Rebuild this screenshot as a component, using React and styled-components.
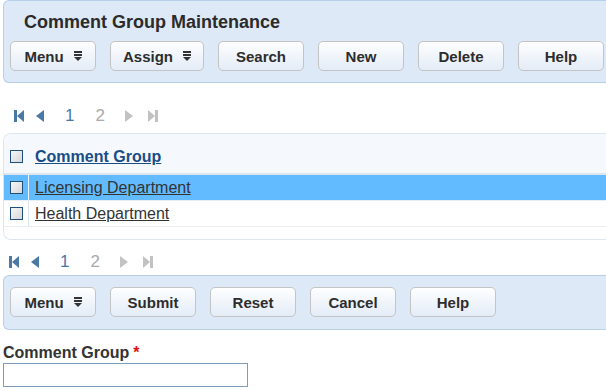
import React from "react";
import styled, { createGlobalStyle } from "styled-components";

const GlobalStyle = createGlobalStyle`
  html, body {
    margin: 0;
    padding: 0;
    background: #ffffff;
  }
  body {
    font-family: "Liberation Sans", Arial, sans-serif;
    overflow: hidden;
  }
`;

const Page = styled.div`
  width: 606px;
  height: 390px;
  padding-left: 3px;
  box-sizing: border-box;
  overflow: hidden;
`;

const Panel = styled.div`
  background: #dde9f6;
  border: 1px solid #b7cfe9;
  border-right: none;
  border-radius: 6px 0 0 6px;
  padding: ${(props) => props.$pad};
  margin-top: ${(props) => props.$top || "0"};
`;

const Title = styled.h1`
  margin: 0 0 8px 14px;
  font-size: 18px;
  line-height: 22px;
  font-weight: 700;
  color: #2b2b2b;
`;

const ButtonBar = styled.div`
  display: flex;
  gap: 14px;
`;

const Button = styled.button`
  min-width: 86px;
  height: 30px;
  padding: 0 12px;
  display: flex;
  align-items: center;
  justify-content: center;
  gap: 10px;
  border: 1px solid #c4c4c4;
  border-radius: 5px;
  background: linear-gradient(#fdfeff, #e4ecf7);
  box-shadow: inset 0 1px 0 #ffffff;
  font-family: "Liberation Sans", Arial, sans-serif;
  font-size: 15px;
  font-weight: 700;
  color: #2d2d2d;
  box-sizing: border-box;
`;

const Pager = styled.div`
  display: flex;
  align-items: center;
  height: 24px;
  padding-left: ${(props) => props.$offset};
  margin-top: ${(props) => props.$top};
`;

const PageItem = styled.span`
  display: flex;
  align-items: center;
  margin-left: ${(props) => props.$space || "0"};
  font-size: 17px;
  color: ${(props) => (props.$active ? "#4a79a8" : "#a9a9a9")};
`;

const Grid = styled.div`
  margin-top: 5px;
  border: 1px solid #dde6f0;
  border-right: none;
  border-radius: 8px 0 0 8px;
  padding-bottom: 12px;
  overflow: hidden;
`;

const HeaderRow = styled.div`
  display: flex;
  align-items: center;
  height: 41px;
  padding-top: 6px;
  box-sizing: border-box;
  background: #f5f9fd;
  border-bottom: 2px solid #dce6f1;
`;

const Row = styled.div`
  display: flex;
  align-items: stretch;
  height: 26px;
  box-sizing: border-box;
  background: ${(props) => (props.$selected ? "#62bbff" : "#ffffff")};
  border-bottom: 1px solid ${(props) => (props.$selected ? "#e6eef6" : "#e8ecf0")};
`;

const CheckCell = styled.div`
  width: 25px;
  padding-left: 6px;
  box-sizing: border-box;
  display: flex;
  align-items: center;
  border-right: 1px solid
    ${(props) =>
      props.$divider ? (props.$selected ? "#e9f5ff" : "#d6e6f5") : "transparent"};
`;

const CheckBox = styled.span`
  display: block;
  width: 13px;
  height: 13px;
  box-sizing: border-box;
  border: 1px solid #1e4f7d;
  background: linear-gradient(135deg, #f7f7f7, #d6d6d6);
`;

const HeaderLink = styled.a`
  padding-left: 6px;
  font-size: 16px;
  font-weight: 700;
  color: #1a4d86;
  text-decoration: underline;
`;

const CellLink = styled.a`
  display: flex;
  align-items: center;
  padding-left: 6px;
  font-size: 16px;
  color: #333333;
  text-decoration: underline;
`;

const Label = styled.div`
  margin-top: 14px;
  font-size: 16px;
  line-height: 18px;
  font-weight: 700;
  color: #333333;
`;

const Required = styled.span`
  color: #e01010;
  margin-left: 4px;
`;

const TextInput = styled.input`
  display: block;
  width: 245px;
  height: 24px;
  margin-top: 1px;
  box-sizing: border-box;
  border: 1px solid #7f9db9;
  padding: 0 4px;
  font-family: "Liberation Sans", Arial, sans-serif;
  font-size: 14px;
`;

function MenuGlyph() {
  return (
    <svg width="8" height="10" viewBox="0 0 8 10">
      <rect x="0" y="0" width="8" height="2" fill="#333" />
      <rect x="0" y="3" width="8" height="2" fill="#333" />
      <polygon points="0,6 8,6 4,10" fill="#333" />
    </svg>
  );
}

function PagerIcon({ kind, color }) {
  const shapes = {
    first: (
      <>
        <rect x="0" y="0" width="3" height="12" fill={color} />
        <polygon points="10,0 10,12 3,6" fill={color} />
      </>
    ),
    prev: <polygon points="8,0 8,12 0,6" fill={color} />,
    next: <polygon points="0,0 0,12 8,6" fill={color} />,
    last: (
      <>
        <polygon points="0,0 0,12 7,6" fill={color} />
        <rect x="7" y="0" width="3" height="12" fill={color} />
      </>
    ),
  };
  const w = kind === "first" || kind === "last" ? 10 : 8;
  return (
    <svg width={w} height="12" viewBox={`0 0 ${w} 12`}>
      {shapes[kind]}
    </svg>
  );
}

function Pagination({ offset, top }) {
  return (
    <Pager $offset={offset} $top={top}>
      <PageItem>
        <PagerIcon kind="first" color="#4b79a6" />
      </PageItem>
      <PageItem $space="12px">
        <PagerIcon kind="prev" color="#4b79a6" />
      </PageItem>
      <PageItem $space="21px" $active>
        1
      </PageItem>
      <PageItem $space="21px">2</PageItem>
      <PageItem $space="20px">
        <PagerIcon kind="next" color="#c2c2c2" />
      </PageItem>
      <PageItem $space="15px">
        <PagerIcon kind="last" color="#c2c2c2" />
      </PageItem>
    </Pager>
  );
}

const rows = [
  { name: "Licensing Department", selected: true },
  { name: "Health Department", selected: false },
];

export default function App() {
  return (
    <Page>
      <GlobalStyle />
      <Panel $pad="10px 0 11px 6px">
        <Title>Comment Group Maintenance</Title>
        <ButtonBar>
          <Button>
            Menu <MenuGlyph />
          </Button>
          <Button>
            Assign <MenuGlyph />
          </Button>
          <Button>Search</Button>
          <Button>New</Button>
          <Button>Delete</Button>
          <Button>Help</Button>
        </ButtonBar>
      </Panel>

      <Pagination offset="11px" top="21px" />

      <Grid>
        <HeaderRow>
          <CheckCell>
            <CheckBox />
          </CheckCell>
          <HeaderLink>Comment Group</HeaderLink>
        </HeaderRow>
        {rows.map((r) => (
          <Row key={r.name} $selected={r.selected}>
            <CheckCell $divider $selected={r.selected}>
              <CheckBox />
            </CheckCell>
            <CellLink>{r.name}</CellLink>
          </Row>
        ))}
      </Grid>

      <Pagination offset="6px" top="10px" />

      <Panel $pad="11px 0 12px 6px" $top="1px">
        <ButtonBar>
          <Button>
            Menu <MenuGlyph />
          </Button>
          <Button>Submit</Button>
          <Button>Reset</Button>
          <Button>Cancel</Button>
          <Button>Help</Button>
        </ButtonBar>
      </Panel>

      <Label>
        Comment Group<Required>*</Required>
      </Label>
      <TextInput />
    </Page>
  );
}
